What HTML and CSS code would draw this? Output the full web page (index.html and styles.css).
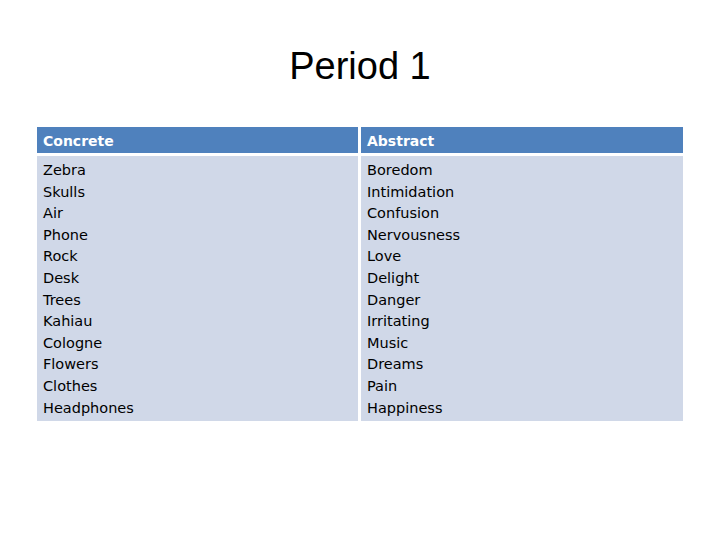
FILE: index.html
```html
<!DOCTYPE html>
<html>
<head>
<meta charset="utf-8">
<link rel="stylesheet" href="styles.css">
</head>
<body>
<div class="slide">
  <h1 class="title">Period 1</h1>
  <div class="table">
    <div class="head">Concrete</div>
    <div class="head">Abstract</div>
    <div class="cell">
      <div>Zebra</div><div>Skulls</div><div>Air</div><div>Phone</div><div>Rock</div><div>Desk</div><div>Trees</div><div>Kahiau</div><div>Cologne</div><div>Flowers</div><div>Clothes</div><div>Headphones</div>
    </div>
    <div class="cell">
      <div>Boredom</div><div>Intimidation</div><div>Confusion</div><div>Nervousness</div><div>Love</div><div>Delight</div><div>Danger</div><div>Irritating</div><div>Music</div><div>Dreams</div><div>Pain</div><div>Happiness</div>
    </div>
  </div>
</div>
</body>
</html>
```

FILE: styles.css
```css
html, body {
  margin: 0;
  padding: 0;
  background: #ffffff;
}
.slide {
  width: 720px;
  height: 540px;
  padding-top: 43px;
  box-sizing: border-box;
}
.title {
  margin: 0 0 38px 0;
  font-family: "Liberation Sans", Arial, sans-serif;
  font-weight: normal;
  font-size: 38px;
  line-height: 46px;
  height: 46px;
  text-align: center;
  color: #000000;
}
.table {
  margin-left: 37px;
  width: 646px;
  display: grid;
  grid-template-columns: 321px 322px;
  column-gap: 3px;
  row-gap: 3px;
  font-family: "DejaVu Sans", Verdana, sans-serif;
  font-size: 14.5px;
  color: #000000;
}
.head {
  background: #4f81bd;
  color: #ffffff;
  font-weight: bold;
  height: 26px;
  line-height: 26px;
  padding: 1px 0 0 6px;
  box-sizing: border-box;
  font-size: 14px;
}
.cell {
  background: #d0d8e8;
  padding: 4px 0 2px 6px;
  line-height: 21.6px;
}
```
